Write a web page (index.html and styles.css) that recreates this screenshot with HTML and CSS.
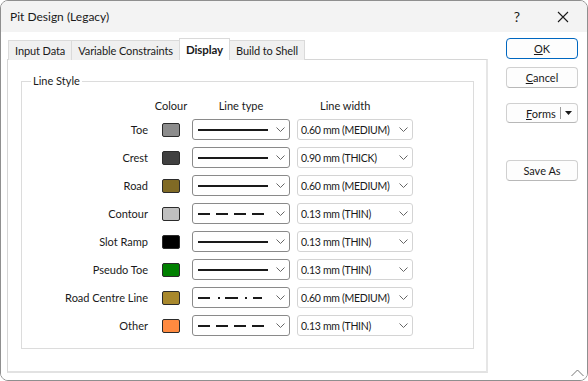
FILE: index.html
```html
<!DOCTYPE html>
<html lang="en">
<head>
<meta charset="utf-8">
<title>Pit Design (Legacy)</title>
<link rel="stylesheet" href="styles.css">
</head>
<body>
<div class="window">
  <div class="titlebar">
    <span class="title">Pit Design (Legacy)</span>
    <span class="tb-btn tb-help">?</span>
    <span class="tb-btn tb-close">
      <svg width="12" height="12" viewBox="0 0 12 12"><path d="M1 1 L11 11 M11 1 L1 11" stroke="#1a1a1a" stroke-width="1.1" fill="none"/></svg>
    </span>
  </div>
  <div class="body">
    <div class="main">
      <div class="tabs">
        <div class="tab">Input Data</div>
        <div class="tab">Variable Constraints</div>
        <div class="tab active">Display</div>
        <div class="tab">Build to Shell</div>
      </div>
      <div class="panel">
        <fieldset class="group">
          <legend>Line Style</legend>
          <div class="grid">
            <span></span>
            <span class="hdr hdr-colour">Colour</span>
            <span class="hdr hdr-type">Line type</span>
            <span class="hdr hdr-width">Line width</span>

            <span class="lbl">Toe</span>
            <span class="swatch c-toe"></span>
            <div class="combo type"><svg class="ln" width="72" height="4"><path d="M0 2 H70" stroke="#1a1a1a" stroke-width="2"/></svg><svg class="chev" width="9" height="5" viewBox="0 0 9 5"><path d="M0.5 0.5 L4.5 4.5 L8.5 0.5" stroke="#666" fill="none"/></svg></div>
            <div class="combo width"><span>0.60 mm (MEDIUM)</span><svg class="chev" width="9" height="5" viewBox="0 0 9 5"><path d="M0.5 0.5 L4.5 4.5 L8.5 0.5" stroke="#666" fill="none"/></svg></div>

            <span class="lbl">Crest</span>
            <span class="swatch c-crest"></span>
            <div class="combo type"><svg class="ln" width="72" height="4"><path d="M0 2 H70" stroke="#1a1a1a" stroke-width="2"/></svg><svg class="chev" width="9" height="5" viewBox="0 0 9 5"><path d="M0.5 0.5 L4.5 4.5 L8.5 0.5" stroke="#666" fill="none"/></svg></div>
            <div class="combo width"><span>0.90 mm (THICK)</span><svg class="chev" width="9" height="5" viewBox="0 0 9 5"><path d="M0.5 0.5 L4.5 4.5 L8.5 0.5" stroke="#666" fill="none"/></svg></div>

            <span class="lbl">Road</span>
            <span class="swatch c-road"></span>
            <div class="combo type"><svg class="ln" width="72" height="4"><path d="M0 2 H70" stroke="#1a1a1a" stroke-width="2"/></svg><svg class="chev" width="9" height="5" viewBox="0 0 9 5"><path d="M0.5 0.5 L4.5 4.5 L8.5 0.5" stroke="#666" fill="none"/></svg></div>
            <div class="combo width"><span>0.60 mm (MEDIUM)</span><svg class="chev" width="9" height="5" viewBox="0 0 9 5"><path d="M0.5 0.5 L4.5 4.5 L8.5 0.5" stroke="#666" fill="none"/></svg></div>

            <span class="lbl">Contour</span>
            <span class="swatch c-contour"></span>
            <div class="combo type"><svg class="ln" width="72" height="4"><path d="M0 2 H66" stroke="#1a1a1a" stroke-width="2" stroke-dasharray="12 6"/></svg><svg class="chev" width="9" height="5" viewBox="0 0 9 5"><path d="M0.5 0.5 L4.5 4.5 L8.5 0.5" stroke="#666" fill="none"/></svg></div>
            <div class="combo width"><span>0.13 mm (THIN)</span><svg class="chev" width="9" height="5" viewBox="0 0 9 5"><path d="M0.5 0.5 L4.5 4.5 L8.5 0.5" stroke="#666" fill="none"/></svg></div>

            <span class="lbl">Slot Ramp</span>
            <span class="swatch c-slot"></span>
            <div class="combo type"><svg class="ln" width="72" height="4"><path d="M0 2 H70" stroke="#1a1a1a" stroke-width="2"/></svg><svg class="chev" width="9" height="5" viewBox="0 0 9 5"><path d="M0.5 0.5 L4.5 4.5 L8.5 0.5" stroke="#666" fill="none"/></svg></div>
            <div class="combo width"><span>0.13 mm (THIN)</span><svg class="chev" width="9" height="5" viewBox="0 0 9 5"><path d="M0.5 0.5 L4.5 4.5 L8.5 0.5" stroke="#666" fill="none"/></svg></div>

            <span class="lbl">Pseudo Toe</span>
            <span class="swatch c-pseudo"></span>
            <div class="combo type"><svg class="ln" width="72" height="4"><path d="M0 2 H70" stroke="#1a1a1a" stroke-width="2"/></svg><svg class="chev" width="9" height="5" viewBox="0 0 9 5"><path d="M0.5 0.5 L4.5 4.5 L8.5 0.5" stroke="#666" fill="none"/></svg></div>
            <div class="combo width"><span>0.13 mm (THIN)</span><svg class="chev" width="9" height="5" viewBox="0 0 9 5"><path d="M0.5 0.5 L4.5 4.5 L8.5 0.5" stroke="#666" fill="none"/></svg></div>

            <span class="lbl">Road Centre Line</span>
            <span class="swatch c-rcl"></span>
            <div class="combo type"><svg class="ln" width="72" height="4"><path d="M0 2 H12 M20 2 H22 M27 2 H40 M47 2 H49 M55 2 H64" stroke="#1a1a1a" stroke-width="2"/></svg><svg class="chev" width="9" height="5" viewBox="0 0 9 5"><path d="M0.5 0.5 L4.5 4.5 L8.5 0.5" stroke="#666" fill="none"/></svg></div>
            <div class="combo width"><span>0.60 mm (MEDIUM)</span><svg class="chev" width="9" height="5" viewBox="0 0 9 5"><path d="M0.5 0.5 L4.5 4.5 L8.5 0.5" stroke="#666" fill="none"/></svg></div>

            <span class="lbl">Other</span>
            <span class="swatch c-other"></span>
            <div class="combo type"><svg class="ln" width="72" height="4"><path d="M0 2 H66" stroke="#1a1a1a" stroke-width="2" stroke-dasharray="12 6"/></svg><svg class="chev" width="9" height="5" viewBox="0 0 9 5"><path d="M0.5 0.5 L4.5 4.5 L8.5 0.5" stroke="#666" fill="none"/></svg></div>
            <div class="combo width"><span>0.13 mm (THIN)</span><svg class="chev" width="9" height="5" viewBox="0 0 9 5"><path d="M0.5 0.5 L4.5 4.5 L8.5 0.5" stroke="#666" fill="none"/></svg></div>
          </div>
        </fieldset>
      </div>
    </div>
    <div class="side">
      <button class="btn primary"><u>O</u>K</button>
      <button class="btn"><u>C</u>ancel</button>
      <div class="btn split">
        <span class="split-label"><u>F</u>orms</span>
        <span class="split-div"></span>
        <svg class="split-arrow" width="7" height="4" viewBox="0 0 7 4"><path d="M0 0 H7 L3.5 4 Z" fill="#1a1a1a"/></svg>
      </div>
      <button class="btn saveas">Save As</button>
    </div>
  </div>
  <svg class="grip" width="13" height="8" viewBox="0 0 13 8"><path d="M0.5 7 L6.5 1 L12.5 7" stroke="#777" fill="none"/></svg>
</div>
</body>
</html>
```

FILE: styles.css
```css
* { box-sizing: border-box; }
html, body { margin: 0; padding: 0; background: #ffffff; }
body {
  font-family: "Lato", "Noto Sans", sans-serif;
  font-size: 11px;
  color: #1a1a1a;
}
.window {
  position: relative;
  width: 588px;
  height: 381px;
  border: 1px solid #8f8f8f;
  border-radius: 8px;
  overflow: hidden;
  background: #ffffff;
  display: flex;
  flex-direction: column;
}
.titlebar {
  height: 31px;
  background: #f3f3f3;
  display: flex;
  align-items: center;
  padding-left: 9px;
  flex: none;
}
.title { flex: 1; font-size: 12px; }
.tb-btn {
  width: 46px;
  display: flex;
  justify-content: center;
  align-items: center;
}
.tb-help { font-size: 14px; }
.tb-close { margin-right: 1px; }
.body {
  flex: 1;
  display: flex;
  padding: 6px 9px 7px 6px;
  background: #ffffff;
}
.main {
  width: 482px;
  display: flex;
  flex-direction: column;
}
.tabs {
  display: flex;
  align-items: flex-end;
  height: 22px;
  padding-left: 1px;
  position: relative;
  z-index: 1;
  margin-bottom: -1px;
}
.tab {
  height: 20px;
  padding: 0 6px;
  border: 1px solid #dadada;
  border-bottom: none;
  border-right: none;
  background: #f0f0f0;
  display: flex;
  align-items: center;
  white-space: nowrap;
  letter-spacing: -0.1px;
}
.tab:nth-child(4) { border-right: 1px solid #dadada; }
.tab.active {
  height: 22px;
  background: #ffffff;
  font-weight: bold;
  font-size: 11.5px;
  border-right: 1px solid #dadada;
  padding: 0 6px 1px;
}
.tab.active + .tab { border-left: none; }
.panel {
  flex: 1;
  border: 1px solid #d6d6d6;
  border-bottom: 2px solid #e2e2e2;
  border-right: 2px solid #e6e6e6;
  background: #ffffff;
  padding: 13px 12px 22px 13px;
}
.group {
  margin: 0;
  height: 100%;
  border: 1px solid #dcdcdc;
  padding: 0;
  min-width: 0;
}
.group legend {
  margin-left: 9px;
  padding: 0 2px;
  line-height: 16px;
}
.grid {
  display: grid;
  grid-template-columns: 140px 30px 105px 116px;
  grid-template-rows: 13px;
  grid-auto-rows: 21px;
  row-gap: 7px;
  padding-top: 10px;
  align-items: center;
}
.hdr { display: flex; line-height: 13px; }
.hdr-colour { justify-content: center; width: 18px; white-space: nowrap; }
.hdr-type { justify-content: center; width: 98px; }
.hdr-width { padding-left: 23px; }
.lbl {
  text-align: right;
  padding-right: 14px;
  white-space: nowrap;
}
.swatch {
  width: 18px;
  height: 14px;
  border: 1px solid #2b2b2b;
  border-radius: 2px;
}
.c-toe { background: #8c8c8c; }
.c-crest { background: #404040; }
.c-road { background: #806a25; }
.c-contour { background: #c0c0c0; }
.c-slot { background: #000000; }
.c-pseudo { background: #008000; }
.c-rcl { background: #a8882c; }
.c-other { background: #ff8a40; }
.combo {
  height: 21px;
  display: flex;
  align-items: center;
  background: #ffffff;
  border-radius: 3px;
}
.combo.type {
  width: 98px;
  border: 1px solid #8a8a8a;
  padding-left: 5px;
}
.combo.width {
  width: 116px;
  border: 1px solid #d4d4d4;
  padding-left: 3px;
}
.combo .ln { flex: none; }
.combo span { flex: 1; white-space: nowrap; font-size: 10.5px; letter-spacing: -0.3px; }
.combo.type .chev { margin-left: auto; margin-right: 4px; }
.combo.width .chev { margin-right: 4px; flex: none; }
.side {
  margin-left: 18px;
  width: 72px;
  display: flex;
  flex-direction: column;
}
.btn {
  font: inherit;
  color: #1a1a1a;
  width: 72px;
  height: 21px;
  background: #fdfdfd;
  border: 1px solid #d0d0d0;
  border-bottom-color: #b8b8b8;
  border-radius: 4px;
  padding: 0;
  margin: 0 0 8px;
  display: flex;
  align-items: center;
  justify-content: center;
}
.btn.primary { border: 1px solid #0067c0; }
.btn u { text-decoration: underline; text-underline-offset: 1px; }
.split { margin-top: 7px; justify-content: flex-start; padding-left: 19px; height: 20px; }
.split-label { width: 34px; }
.split-div { width: 1px; height: 12px; background: #9a9a9a; margin: 0 4px 0 0; }
.saveas { margin-top: 29px; }
.grip { position: absolute; right: 3px; bottom: 3px; }
```
